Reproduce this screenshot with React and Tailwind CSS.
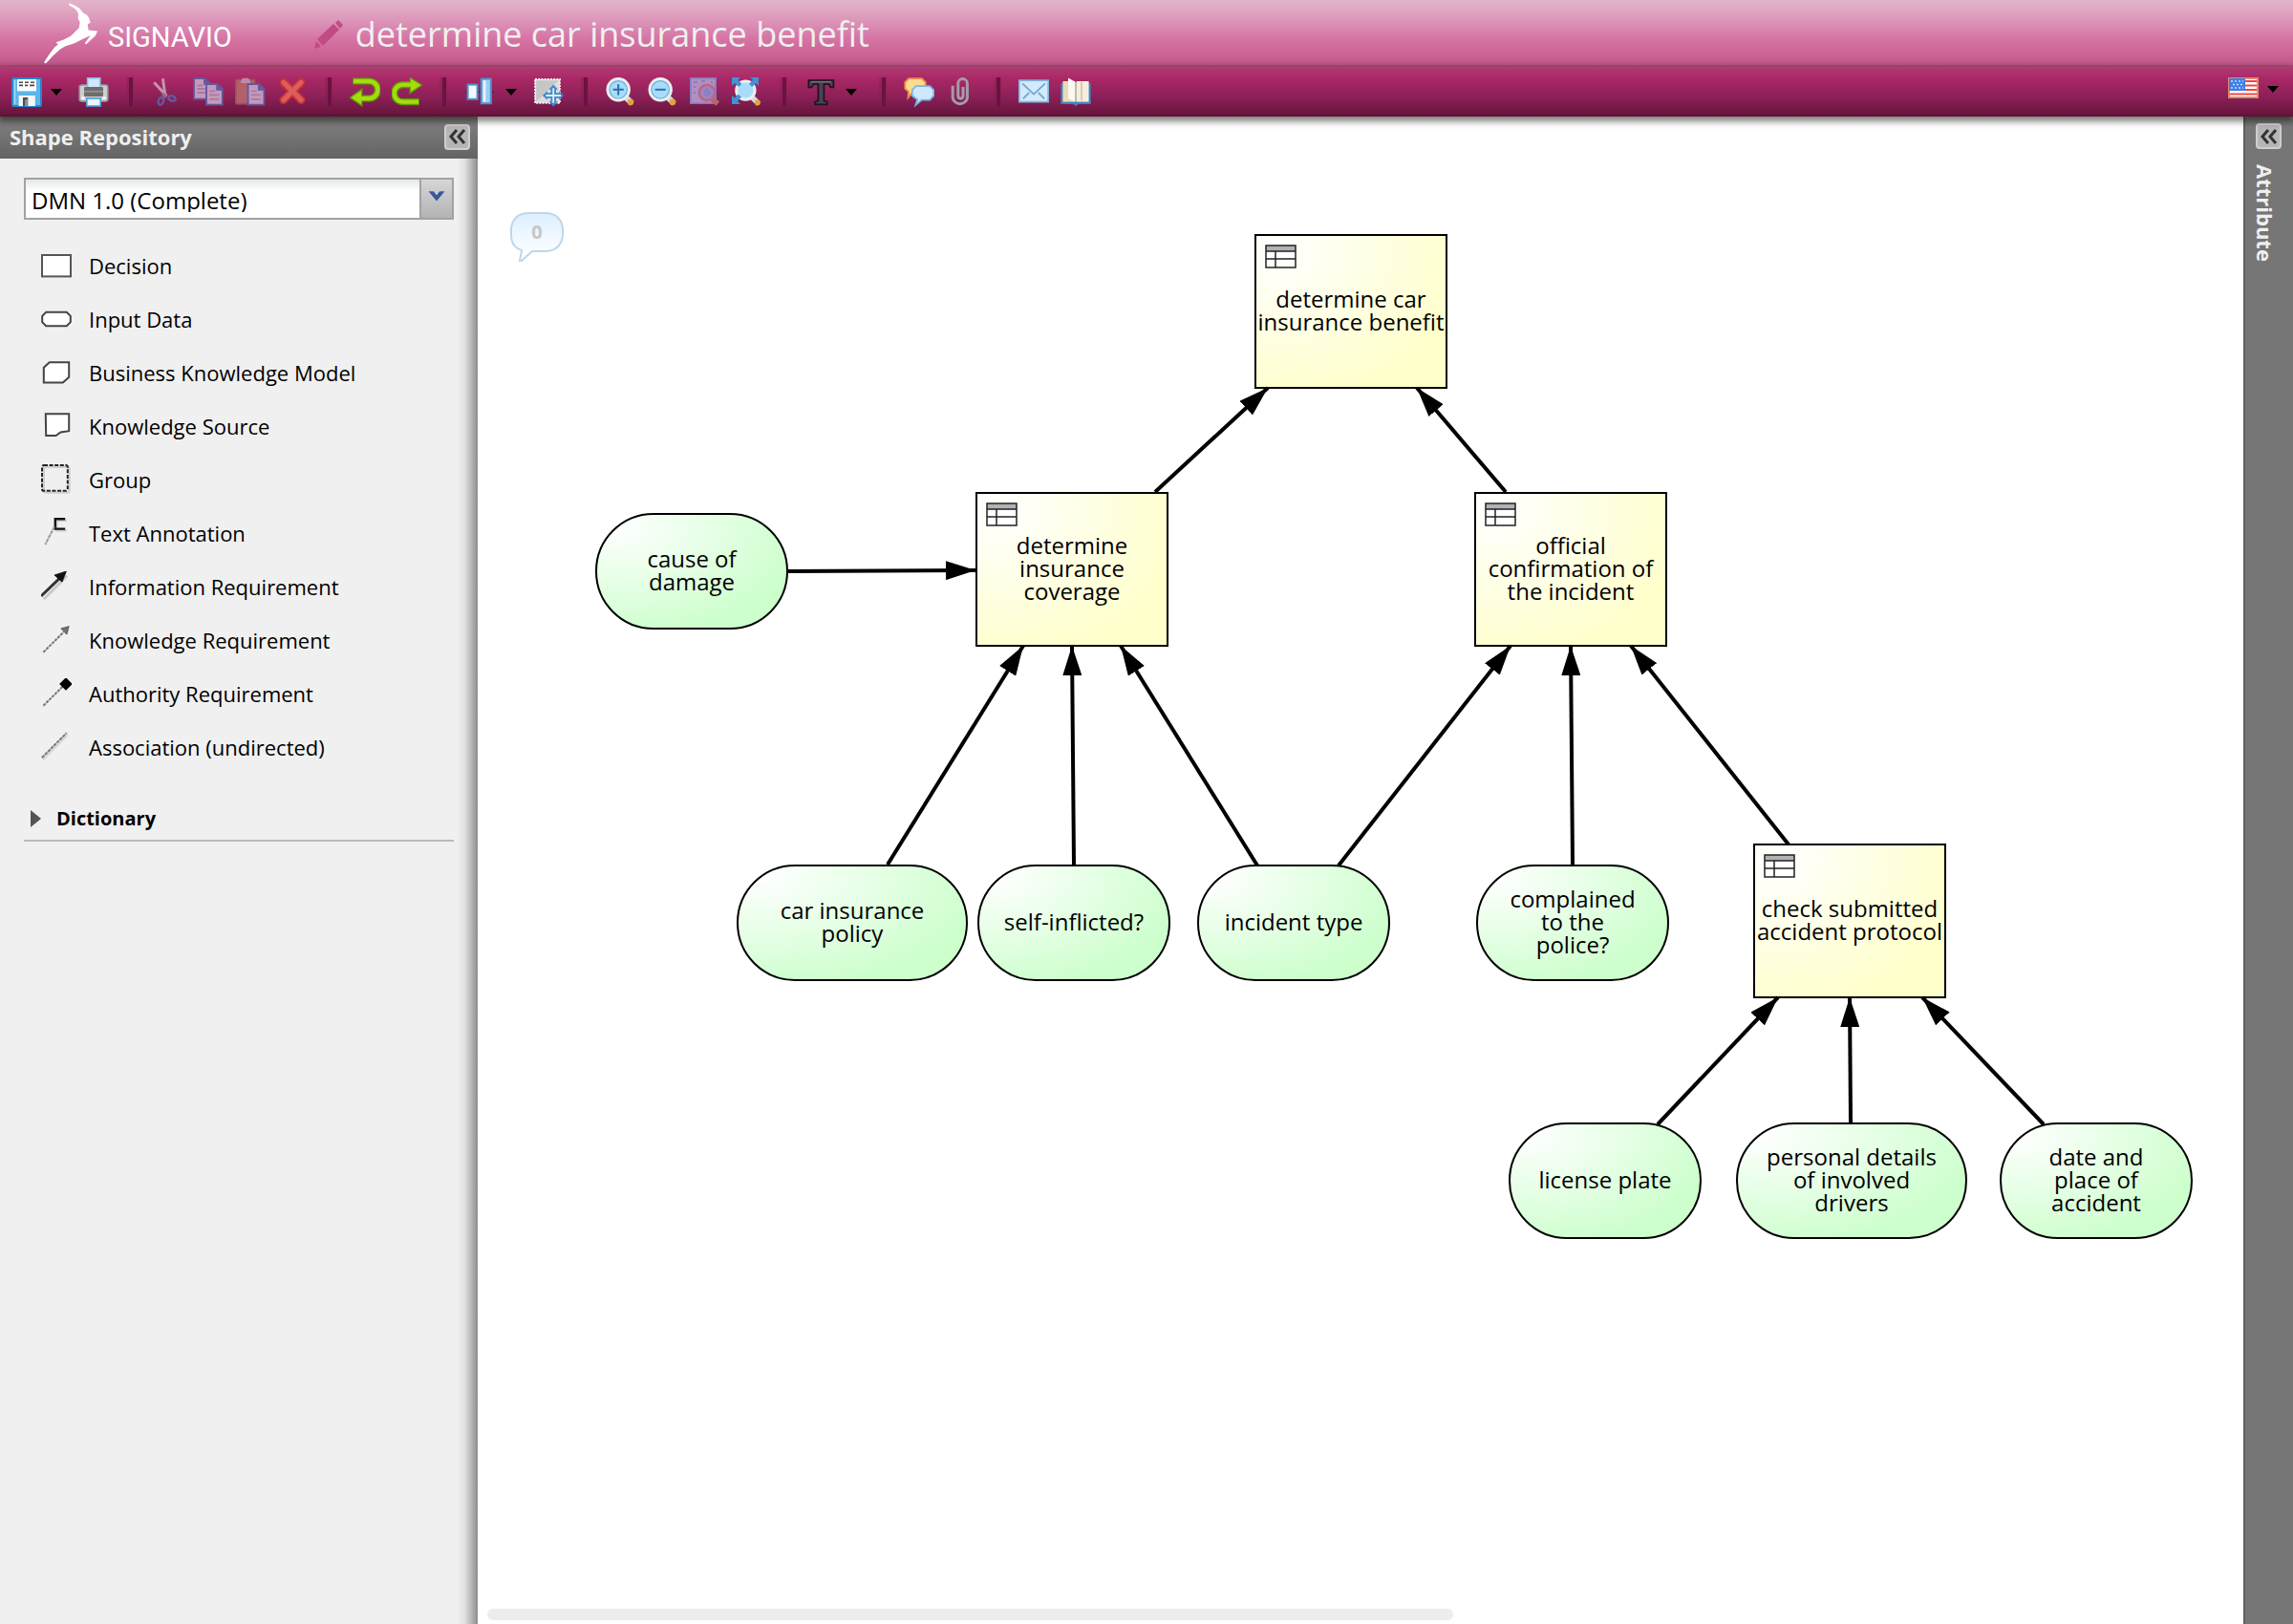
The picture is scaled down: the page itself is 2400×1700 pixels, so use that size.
import { useState } from "react";

// toolbar icons, drawn on a 16px grid and shown at 32px
const icons = {
    save: (
        <>
            <rect x="0.5" y="0.5" width="15" height="14.5" rx="0.6" fill="#5db4ea" stroke="#2586c9" />
            <rect x="1.2" y="1.2" width="1" height="13" fill="#9bd5f5" />
            <path d="M3 1h10v6.2H3z" fill="#fdfdfd" />
            <path d="M4 2.6h2M7 2.6h2M10 2.6h2M4 4.2h2M7 4.2h1.5M9.5 4.2h2.5" stroke="#4a4a4a" strokeWidth="0.8" />
            <path d="M3.8 9.5h8.6V15H3.8z" fill="#f4f6fa" />
            <path d="M6 10.5h2.6V15H6z" fill="#4b4b52" />
            <path d="M7 12l1.6-1v4H7z" fill="#8e8e98" />
        </>
    ),
    print: (
        <>
            <rect x="0.6" y="4" width="14.8" height="8.5" rx="1.2" fill="#cfcfcf" stroke="#9a9a9a" strokeWidth="0.8" />
            <rect x="4.8" y="0.4" width="6.6" height="5" fill="#cfe8fb" stroke="#8cbce4" strokeWidth="0.8" />
            <rect x="3" y="5" width="10" height="5" rx="0.6" fill="#6c6c6c" />
            <path d="M3 7.4h10" stroke="#8f8f8f" />
            <rect x="4.4" y="11" width="7.2" height="4" fill="#e8f5ff" stroke="#4f9bdc" strokeWidth="0.8" />
            <path d="M1.6 10.8h1.6M12.8 10.8h1.6" stroke="#fff" strokeWidth="1.2" />
        </>
    ),
    cut: (
        <g fill="none">
            <path d="M1.6 2.6l6.6 7.2M6.2 0.6l1.2 8.4" stroke="#c493ac" strokeWidth="1.5" />
            <path d="M6 8.4l2 2" stroke="#8a6a92" strokeWidth="1.6" />
            <ellipse cx="5.2" cy="12.4" rx="1.3" ry="2" transform="rotate(20 5.2 12.4)" stroke="#6558a0" strokeWidth="1.2" />
            <ellipse cx="11" cy="11" rx="1.9" ry="1.3" transform="rotate(20 11 11)" stroke="#6558a0" strokeWidth="1.2" />
        </g>
    ),
    copy: (
        <g stroke="#66569b" strokeWidth="0.9" fill="#c49abb">
            <path d="M0.5 0.5h5.8l2.6 2.6v8.2H0.5z" />
            <path d="M2.2 4.2h3M2.2 6h5M2.2 8h5" stroke="#a77aa5" />
            <path d="M6 0.8v2.6h2.6z" fill="#7060a5" />
            <path d="M7 3.5h5.8l2.6 2.6v8.2H7z" />
            <path d="M8.6 7.2h3M8.6 9.2h5M8.6 11.4h5" stroke="#a77aa5" />
            <path d="M12.6 3.8v2.6h2.6z" fill="#7060a5" />
        </g>
    ),
    paste: (
        <>
            <rect x="0.4" y="1.2" width="10" height="12.6" rx="0.5" fill="#b2606a" stroke="#a0505a" strokeWidth="0.8" />
            <path d="M3 3V1.6L4.2 0.4h2.6L8 1.6V3z" fill="#b98bb0" />
            <g stroke="#66569b" strokeWidth="0.9" fill="#c49abb">
                <path d="M6.8 3.5h5.8l2.6 2.6v8.2H6.8z" />
                <path d="M8.4 7.2h3M8.4 9.2h5M8.4 11.4h5" stroke="#a77aa5" />
                <path d="M12.4 3.8v2.6H15z" fill="#7060a5" />
            </g>
        </>
    ),
    remove: (
        <>
            <path d="M3.4 2.6L12.6 11.8M12.6 2.6L3.4 11.8" stroke="#c5303a" strokeWidth="4.4" strokeLinecap="round" />
            <path d="M3.4 2.6L12.6 11.8M12.6 2.6L3.4 11.8" stroke="#dd5c5c" strokeWidth="2.6" strokeLinecap="round" />
        </>
    ),
    undo: (
        <>
            <path d="M1.6 2h8.6a4.2 4.2 0 010 9H5" fill="none" stroke="#5f9e00" strokeWidth="3.6" />
            <path d="M6.4 6.2v8.6L0.2 10.6z" fill="#a4dc10" stroke="#5f9e00" strokeWidth="0.7" />
            <path d="M2 2h8.2a4.2 4.2 0 010 9H4.6" fill="none" stroke="#a4dc10" strokeWidth="2.2" />
        </>
    ),
    redo: (
        <>
            <path d="M14.4 12.8H5.8a4.2 4.2 0 010-9H11" fill="none" stroke="#5f9e00" strokeWidth="3.6" />
            <path d="M9.6 0.2v8L15.8 4z" fill="#a4dc10" stroke="#5f9e00" strokeWidth="0.7" />
            <path d="M14 12.8H5.8a4.2 4.2 0 010-9h5.6" fill="none" stroke="#a4dc10" strokeWidth="2.2" />
        </>
    ),
    align: (
        <>
            <path d="M0.6 7.6h15" stroke="#3b2740" strokeWidth="0.6" />
            <rect x="1.8" y="3.8" width="5" height="7.6" fill="#f3f9fe" stroke="#4d94cf" />
            <rect x="8.9" y="0.8" width="5" height="12.8" fill="#9bcdf3" stroke="#4d94cf" />
            <rect x="9.8" y="1.6" width="1.4" height="11.2" fill="#e4f3fd" />
        </>
    ),
    canvasSize: (
        <>
            <rect x="1" y="1" width="13" height="12.4" fill="#dcdcdc" stroke="#f6f6f6" strokeWidth="0.9" strokeDasharray="1 0.6" />
            <path d="M1.6 1.6h11.6L1.6 12.8z" fill="#c6c6c6" />
            <path d="M10.6 5.600v7.800M6.700 9.500h7.800" stroke="#3f8ccc" strokeWidth="2.800" />
            <path d="M10.600 3.800l2.400 2.600H8.200zM10.600 15.200l2.400-2.600H8.200zM4.900 9.500l2.600-2.400v4.800zM16 9.500l-2.400-2.400v4.800z" fill="#3f8ccc" />
            <path d="M10.600 5.600v7.800M6.700 9.500h7.800" stroke="#dfeefa" strokeWidth="0.900" />
        </>
    ),
    zoomIn: (
        <>
            <path d="M10.4 10.4l3.4 3.2" stroke="#d8d8d8" strokeWidth="3" />
            <circle cx="13" cy="13" r="1.6" fill="#e2a436" />
            <circle cx="6.6" cy="6.4" r="5.4" fill="#a9dcfa" stroke="#e9efee" strokeWidth="1.9" />
            <circle cx="6.6" cy="6.4" r="4.6" fill="none" stroke="#66aee0" strokeWidth="0.6" />
            <path d="M3.8 6.4h5.6M6.6 3.6v5.6" stroke="#2b6fae" strokeWidth="1" />
        </>
    ),
    zoomOut: (
        <>
            <path d="M10.4 10.4l3.4 3.2" stroke="#d8d8d8" strokeWidth="3" />
            <circle cx="13" cy="13" r="1.6" fill="#e2a436" />
            <circle cx="6.6" cy="6.4" r="5.4" fill="#a9dcfa" stroke="#e9efee" strokeWidth="1.9" />
            <circle cx="6.6" cy="6.4" r="4.6" fill="none" stroke="#66aee0" strokeWidth="0.6" />
            <path d="M3.8 6.4h5.6" stroke="#2b6fae" strokeWidth="1" />
        </>
    ),
    zoomActual: (
        <>
            <rect x="0.4" y="0.4" width="13.2" height="13.2" fill="#b28fc0" stroke="#8379be" strokeWidth="0.8" />
            <path d="M2 2.4h2M6 1.8h2M2 5h1M2 8h1M11 2.6h1" stroke="#8379be" strokeWidth="0.9" />
            <path d="M11.4 11l3.2 2.8" stroke="#b9646c" strokeWidth="2.8" />
            <circle cx="9" cy="8" r="4" fill="#a189c4" stroke="#b56a90" strokeWidth="1.5" />
            <circle cx="9" cy="8" r="2.2" fill="#8c80c4" />
        </>
    ),
    zoomFit: (
        <>
            <path d="M10.8 10.6l3.2 3.2" stroke="#d8d8d8" strokeWidth="2.8" />
            <circle cx="13.4" cy="13.2" r="1.5" fill="#e2a436" />
            <circle cx="7.2" cy="6.8" r="4.8" fill="#a9dcfa" stroke="#e9efee" strokeWidth="1.6" />
            <path d="M0 0h4.4L3.2 1.4l2 2-1.6 1.6-2-2L0 4.4zM14 0v4.4l-1.4-1.4-2 2L9 3.4l2-2L9.6 0zM0 14V9.4l1.4 1.4 2-2L5 10.4l-2 2L4.4 14z" fill="#3f93d6" />
        </>
    ),
    text: (
        <>
            <path d="M2.2 1.6h13v3.6h-1.6l-.8-1.6h-2.6v8.6l1.6.6v1.4H5.6v-1.4l1.6-.6V3.6H4.6l-.8 1.6H2.2z" fill="#4a4350" stroke="#231223" strokeWidth="0.9" />
            <path d="M3.4 2.3H14" stroke="#7a6f7c" strokeWidth="0.7" />
        </>
    ),
    comments: (
        <>
            <path d="M2.6 0.6h6.8l2 2v3.2l-2 2H4.6l-2.4 2.8.3-3L0.6 5.8V2.6z" fill="#fbdc8c" stroke="#ee8a4b" strokeWidth="0.9" />
            <path d="M6.4 4.6h7.2l2 2v3l-2 2.2H9.4l-3.2 2.6.9-2.8-2.7-2v-3z" fill="#cfe9fc" stroke="#79b6e6" strokeWidth="0.9" />
        </>
    ),
    attach: (
        <path
            d="M3.6 4.4v6.4a3.9 3.9 0 007.6 0V3.2a2.4 2.4 0 00-4.8 0v6.6a1.3 1.3 0 002.6 0V5"
            fill="none"
            stroke="#a69bab"
            strokeWidth="1.5"
        />
    ),
    mail: (
        <>
            <rect x="0.4" y="1.6" width="15.2" height="11.2" fill="#d3eafb" stroke="#7fb6de" strokeWidth="0.9" />
            <path d="M2 3.2l6 5.6 6-5.6M2.4 11.2L5.6 8M13.6 11.2L10.4 8" fill="none" stroke="#6fa8cf" strokeWidth="0.9" />
        </>
    ),
    book: (
        <>
            <path d="M0.2 3h15.6v11H9.4L8 15 6.6 14H0.2z" fill="#3a85c2" />
            <path d="M1.2 2h6.4v10.8H1.2z" fill="#ecd9b6" />
            <path d="M8.4 2h6.4v10.8H8.4z" fill="#f5eee0" />
            <path d="M4 0.2l3.6 2v10.6L4 11z" fill="#fbf8f2" />
            <path d="M8 2.4v10.4M11 2.4v9.8" stroke="#d8c39c" strokeWidth="0.8" />
        </>
    ),
};

const toolbar = [
    [
        { icon: "save", label: "Save", menu: "tight" },
        { icon: "print", label: "Print" },
    ],
    [
        { icon: "cut", label: "Cut" },
        { icon: "copy", label: "Copy" },
        { icon: "paste", label: "Paste" },
        { icon: "remove", label: "Delete" },
    ],
    [
        { icon: "undo", label: "Undo" },
        { icon: "redo", label: "Redo" },
    ],
    [
        { icon: "align", label: "Align", menu: "normal" },
        { icon: "canvasSize", label: "Canvas size" },
    ],
    [
        { icon: "zoomIn", label: "Zoom in" },
        { icon: "zoomOut", label: "Zoom out" },
        { icon: "zoomActual", label: "Actual size" },
        { icon: "zoomFit", label: "Fit to screen" },
    ],
    [{ icon: "text", label: "Text format", menu: "normal" }],
    [
        { icon: "comments", label: "Comments" },
        { icon: "attach", label: "Attachment" },
    ],
    [
        { icon: "mail", label: "Invite" },
        { icon: "book", label: "Documentation" },
    ],
];

const shapes = [
    {
        name: "Decision",
        icon: <rect x="0.5" y="2.5" width="15" height="11.2" fill="#fff" stroke="#555" />,
    },
    {
        name: "Input Data",
        icon: <path d="M2.6 4.4h10.8l2 2v3.2l-2 2H2.6l-2-2V6.4z" fill="#fff" stroke="#444" />,
    },
    {
        name: "Business Knowledge Model",
        icon: <path d="M4.4 2.6h10.2v7.8l-3.2 2.8H1.4V5.4z" fill="#fff" stroke="#444" />,
    },
    {
        name: "Knowledge Source",
        icon: <path d="M2.4 1.6h12.2v9l-4.4.6-2.4 1.8H2.6z" fill="#fff" stroke="#444" />,
    },
    {
        name: "Group",
        icon: (
            <>
                <rect x="1.4" y="1.4" width="13.4" height="13.4" rx="1" fill="none" stroke="#d0d0d0" strokeWidth="1.2" />
                <rect x="0.5" y="0.5" width="13.4" height="13.4" rx="1" fill="none" stroke="#222" strokeDasharray="2 0.8" />
            </>
        ),
    },
    {
        name: "Text Annotation",
        icon: (
            <>
                <path d="M13.4 1.4H8.200v5.200h5.200" fill="none" stroke="#ccc" strokeWidth="1.200" />
                <path d="M12.6 0.6H7.4v5.2h5.2" fill="none" stroke="#111" strokeWidth="1.2" />
                <path d="M7 4.6L2.2 14" stroke="#999" strokeWidth="1" strokeDasharray="2 0.4" />
            </>
        ),
    },
    {
        name: "Information Requirement",
        icon: (
            <>
                <path d="M1.4 14.600L13.600 2.400" stroke="#c8c8c8" strokeWidth="1.400" />
                <path d="M0 13L11 2.4" stroke="#333" strokeWidth="1.5" />
                <path d="M13.2 0l-2.2 5.6L7 2z" fill="#111" stroke="#111" strokeWidth="0.4" />
            </>
        ),
    },
    {
        name: "Knowledge Requirement",
        icon: (
            <>
                <path d="M1.2 14.4L13 2.6" stroke="#777" strokeWidth="1" strokeDasharray="1.6 0.5" />
                <path d="M10.400 2.200l3.800-1-1 3.800" fill="#777" stroke="#666" />
            </>
        ),
    },
    {
        name: "Authority Requirement",
        icon: (
            <>
                <path d="M1.2 14.4L12 3.6" stroke="#777" strokeWidth="1" strokeDasharray="1.6 0.5" />
                <path d="M13 0l3 3-3 3-3-3z" fill="#000" stroke="#000" strokeWidth="0.6" />
            </>
        ),
    },
    {
        name: "Association (undirected)",
        icon: (
            <>
                <path d="M1 14.6L13.8 1.8" stroke="#d5d5d5" strokeWidth="1" />
                <path d="M0.4 13.6L13.4 0.6" stroke="#777" strokeWidth="1" strokeDasharray="1.8 0.4" />
            </>
        ),
    },
];

// positions are relative to the canvas origin
const nodes = [
    { type: "decision", x: 813, y: 123, w: 202, text: "determine car\ninsurance benefit" },
    { type: "decision", x: 521, y: 393, w: 202, text: "determine\ninsurance\ncoverage" },
    { type: "decision", x: 1043, y: 393, w: 202, text: "official\nconfirmation of\nthe incident" },
    { type: "decision", x: 1335, y: 761, w: 202, text: "check submitted\naccident protocol" },
    { type: "input", x: 123, y: 415, w: 202, text: "cause of\ndamage" },
    { type: "input", x: 271, y: 783, w: 242, text: "car insurance\npolicy" },
    { type: "input", x: 523, y: 783, w: 202, text: "self-inflicted?" },
    { type: "input", x: 753, y: 783, w: 202, text: "incident type" },
    { type: "input", x: 1045, y: 783, w: 202, text: "complained\nto the\npolice?" },
    { type: "input", x: 1079, y: 1053, w: 202, text: "license plate" },
    { type: "input", x: 1317, y: 1053, w: 242, text: "personal details\nof involved\ndrivers" },
    { type: "input", x: 1593, y: 1053, w: 202, text: "date and\nplace of\naccident" },
];

const edges = [
    [709, 393, 827, 284],
    [1076, 393, 983, 284],
    [325, 476, 521, 475],
    [429, 783, 571, 554],
    [624, 783, 622, 554],
    [816, 784, 673, 554],
    [901, 784, 1081, 554],
    [1146, 783, 1144, 554],
    [1372, 762, 1207, 554],
    [1235, 1055, 1361, 922],
    [1437, 1053, 1436, 922],
    [1639, 1055, 1512, 922],
];

function Caret({ className = "" }) {
    return (
        <svg viewBox="0 0 14 8" className={`h-2 w-[14px] ${className}`}>
            <path d="M1 0h12L7 7z" fill="#000" />
        </svg>
    );
}

function ToolButton({ icon, label, menu }) {
    return (
        <button type="button" aria-label={label} className="flex items-center">
            <svg viewBox="0 0 16 16" className="size-8">
                {icons[icon]}
            </svg>
            {menu && <Caret className={menu === "tight" ? "ml-2 mr-1" : "ml-[10px] mr-1"} />}
        </button>
    );
}

function Separator() {
    return (
        <div className="mx-[18px] flex h-[30px] w-2 bg-[#8a1b50]/40">
            <div className="ml-[3px] w-1 bg-[#6a1340]" />
        </div>
    );
}

function CollapseButton({ label }) {
    return (
        <button
            type="button"
            aria-label={label}
            className="flex size-[27px] items-center justify-center rounded-[4px] border-2 border-[#cfcfcf] bg-[#b6b6b6]"
        >
            <svg viewBox="0 0 18 16" className="h-4 w-[18px]" fill="none" stroke="#333" strokeWidth="3">
                <path d="M8 1L2 8l6 7M16 1l-6 7 6 7" />
            </svg>
        </button>
    );
}

function Header() {
    return (
        <header className="flex h-[70px] items-center border-b-2 border-[#bd4b80] bg-[linear-gradient(to_bottom,#e2b4ca_0px,#dd98ba_20px,#d675a5_40px,#cc6596_56px,#c05888_68px)]">
            <a href="#" aria-label="Signavio" className="ml-11 flex items-center text-white">
                <svg viewBox="132 8 180 200" className="h-[67px] w-[60px]" fill="currentColor">
                    <path d="M216 14L232 20L248 29L257 40L262 46L272 50L279 60L284 76L275 80L278 99L306 102L300 116L271 143L266 140L284 116L262 126L234 140L206 149L190 158L166 180L144 204L138 200L158 170L172 152L182 145L176 137L200 129L222 118L238 102L248 92L251 74L245 62L246 48L240 36L228 27L218 22Z" />
                </svg>
                <span className="ml-[9px] mt-[10px] font-['Roboto',sans-serif] text-[29px] leading-none">SIGNAVIO</span>
            </a>
            <button type="button" aria-label="Rename diagram" className="ml-[86px] mt-1">
                <svg viewBox="0 0 30 30" className="size-[30px]" fill="#bf4c83">
                    <path d="M0 30l2-8 5 6zM3 20L20 4l6 6L9 27zM22 3l3-3 5 5-3 4z" />
                </svg>
            </button>
            <h1 className="ml-[13px] mt-1 text-[36px] leading-[48px] text-[#f0f0f0]">determine car insurance benefit</h1>
        </header>
    );
}

function Toolbar() {
    return (
        <nav className="relative z-10 flex h-[52px] items-start bg-[linear-gradient(to_bottom,#b03c74_0px,#a92764_13px,#8b2058_32px,#6b163f_48px,#5c1034_52px)] pl-3 pr-[14px] pt-[11px] shadow-[0_3px_7px_2px_rgba(0,0,0,0.5)]">
            {toolbar.map((group, i) => (
                <div key={i} className="flex">
                    {i > 0 && <Separator />}
                    <div className="flex gap-3">
                        {group.map((item) => (
                            <ToolButton key={item.icon} {...item} />
                        ))}
                    </div>
                </div>
            ))}
            <button type="button" aria-label="Language" className="ml-auto flex items-center gap-2">
                <svg viewBox="0 0 32 22" className="h-[22px] w-8">
                    <rect width="32" height="22" fill="#e08a6a" />
                    <rect x="2" y="2" width="28" height="18" fill="#fff" />
                    <path d="M2 4h28M2 8.5h28M2 13h28M2 17.5h28" stroke="#f0453f" strokeWidth="2.2" />
                    <rect x="1" y="1" width="17" height="13" fill="#3f7de8" />
                    <path d="M3 4h13M5 7.5h11M3 11h13" stroke="#cfe0ff" strokeWidth="1.6" strokeDasharray="2 2" />
                </svg>
                <Caret className="mt-1" />
            </button>
        </nav>
    );
}

function Sidebar() {
    const [stencil, setStencil] = useState("DMN 1.0 (Complete)");

    return (
        <aside className="flex w-[500px] shrink-0 flex-col bg-[#f0f0f0]">
            <div className="flex h-11 items-center justify-between bg-linear-to-b from-[#828282] to-[#636363] pb-0.5 pl-[10px] pr-2">
                <h2 className="text-[22px] font-bold leading-none text-[#efefef]">Shape Repository</h2>
                <CollapseButton label="Collapse shape repository" />
            </div>
            <div className="flex-1 bg-[linear-gradient(to_left,#8c8c8c_0px,#b4b4b4_6px,#e2e2e2_14px,#f0f0f0_22px)] px-[25px] pt-5">
                <div className="grid h-11 grid-cols-[1fr_34px] border-2 border-[#a2a2a2] bg-linear-to-b from-[#e4e9ea] via-white via-30% to-white">
                    <select
                        aria-label="Stencil set"
                        value={stencil}
                        onChange={(e) => setStencil(e.target.value)}
                        className="col-span-2 col-start-1 row-start-1 appearance-none bg-transparent pl-1.5 pt-[3px] text-[24px] leading-none text-black outline-none"
                    >
                        <option>DMN 1.0 (Complete)</option>
                    </select>
                    <div className="pointer-events-none col-start-2 row-start-1 flex items-center justify-center border-l-2 border-[#a2a2a2] bg-linear-to-b from-[#d6d6d6] to-[#b4b4b4]">
                        <svg viewBox="0 0 18 12" className="mb-1 h-3 w-[18px]">
                            <path d="M0 0h6l3 4 3-4h6l-9 11z" fill="#3a5795" stroke="#e6e6ee" strokeWidth="0.5" />
                        </svg>
                    </div>
                </div>

                <ul className="mt-5">
                    {shapes.map((shape) => (
                        <li key={shape.name} className="flex h-14 items-center pl-[18px]">
                            <svg viewBox="0 0 16 16" className="size-8">
                                {shape.icon}
                            </svg>
                            <span className="ml-[18px] text-[22px] leading-none text-black">{shape.name}</span>
                        </li>
                    ))}
                </ul>

                <button
                    type="button"
                    className="mt-6 flex h-[47px] w-full items-center border-b-2 border-[#bababa] pl-1.5 text-[20px] font-bold leading-none text-black"
                >
                    <svg viewBox="0 0 12 20" className="h-5 w-3">
                        <path d="M1 1l11 9L1 19z" fill="#555" />
                    </svg>
                    <span className="ml-4">Dictionary</span>
                </button>
            </div>
        </aside>
    );
}

function Node({ node }) {
    const decision = node.type === "decision";
    return (
        <div
            className={`absolute flex items-center justify-center border-2 border-black pb-0.5 ${
                decision
                    ? "h-[162px] bg-[radial-gradient(100%_100%_at_10%_10%,#ffffff,#ffffcc)]"
                    : "h-[122px] rounded-full bg-[radial-gradient(100%_100%_at_10%_10%,#ffffff,#ccffcc)]"
            }`}
            style={{ left: node.x, top: node.y, width: node.w }}
        >
            {decision && (
                <svg viewBox="0 0 33 25" className="absolute left-[9px] top-[9px] h-[25px] w-[33px]">
                    <rect x="1" y="1" width="31" height="23" fill="#fff" />
                    <rect x="1" y="1" width="31" height="6" fill="#b4b0b4" />
                    <path d="M1 1h31v23H1zM1 7h31M1 15h31M11 7V24" fill="none" stroke="#222" strokeWidth="1.5" />
                </svg>
            )}
            <p className="whitespace-pre text-center text-[24px] leading-6 text-black">{node.text}</p>
        </div>
    );
}

function Canvas() {
    return (
        <main className="flex min-w-0 flex-1 flex-col bg-white">
            <div className="relative flex-1 overflow-hidden">
                {nodes.map((node) => (
                    <Node key={node.text} node={node} />
                ))}
                <svg className="pointer-events-none absolute inset-0 size-full">
                    <defs>
                        <marker id="arrow" markerUnits="userSpaceOnUse" markerWidth="31" markerHeight="20" refX="31" refY="10" orient="auto">
                            <path d="M0 0l31 10L0 20z" fill="#000" />
                        </marker>
                    </defs>
                    {edges.map(([x1, y1, x2, y2], i) => (
                        <line key={i} x1={x1} y1={y1} x2={x2} y2={y2} stroke="#000" strokeWidth="4" markerEnd="url(#arrow)" />
                    ))}
                </svg>
                <button
                    type="button"
                    aria-label="Comments on this diagram"
                    className="absolute left-8 top-[98px] flex h-[58px] w-[60px] justify-center pt-[11px] text-[20px] font-bold leading-6 text-[#c6c6c6]"
                >
                    <svg viewBox="0 0 60 58" className="absolute inset-0 size-full">
                        <defs>
                            <linearGradient id="bubble" x1="0" y1="0" x2="0" y2="1">
                                <stop offset="0" stopColor="#dceeff" />
                                <stop offset="0.8" stopColor="#fbfeff" />
                            </linearGradient>
                        </defs>
                        <path
                            d="M20 3h20q15 1 17 16v8q-2 15-17 16H25L14 53h-2l2-11Q3 38 3 27v-8Q5 4 20 3z"
                            fill="url(#bubble)"
                            stroke="#bfd6ea"
                            strokeWidth="2"
                        />
                    </svg>
                    <span className="relative">0</span>
                </button>
            </div>
            <div className="mb-1 ml-[10px] h-3 w-[1011px] rounded-full bg-[#ededed]" />
        </main>
    );
}

export default function App() {
    return (
        <div className="flex min-h-screen flex-col bg-white font-['Open_Sans','Noto_Sans',sans-serif]">
            <Header />
            <Toolbar />
            <div className="flex flex-1">
                <Sidebar />
                <Canvas />
                <aside className="flex w-[52px] shrink-0 flex-col items-start border-l-2 border-[#5f5f5f] bg-[#767676] pl-[11px] pt-[7px]">
                    <CollapseButton label="Expand attributes" />
                    <h2 className="mt-4 text-[22px] font-bold leading-5 text-[#efefef] [writing-mode:vertical-rl]">Attribute</h2>
                </aside>
            </div>
        </div>
    );
}
